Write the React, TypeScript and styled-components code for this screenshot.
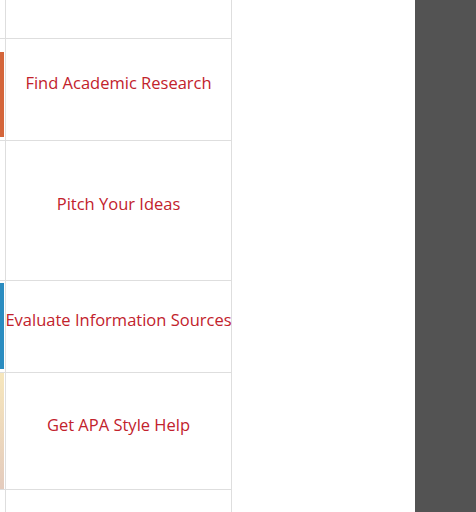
import styled, { createGlobalStyle } from 'styled-components';

const GlobalStyle = createGlobalStyle`
  html, body {
    margin: 0;
    padding: 0;
    background: #ffffff;
  }
  body {
    font-family: 'Open Sans', 'Liberation Sans', sans-serif;
  }
`

type AccentProps = {
  color: string
  top: number
  bottom: number
}

type RowProps = {
  height: number
}

const Page = styled.div`
  display: flex;
  width: 476px;
  height: 512px;
  overflow: hidden;
`

const Column = styled.div`
  display: flex;
  flex-direction: column;
  width: 232px;
  flex: 0 0 auto;
`

const Row = styled.div<RowProps>`
  display: flex;
  height: ${props => props.height}px;
  flex: 0 0 auto;
  border-bottom: 1px solid #dedede;
`

const Accent = styled.div<AccentProps>`
  width: 4px;
  margin-top: ${props => props.top}px;
  margin-bottom: ${props => props.bottom}px;
  margin-right: 1px;
  background: ${props => props.color};
  flex: 0 0 auto;
`

const Cell = styled.div`
  flex: 1;
  min-width: 0;
  display: flex;
  align-items: center;
  justify-content: center;
  padding-bottom: 14px;
  border-left: 1px solid #dedede;
  border-right: 1px solid #dedede;
  color: #c2222c;
  font-size: 16.5px;
  white-space: nowrap;
`

const Gap = styled.div`
  flex: 1;
`

const SidePanel = styled.div`
  width: 61px;
  flex: 0 0 auto;
  background: #535353;
`

const rows = [
  { label: '', height: 38, accent: 'transparent', top: 0, bottom: 0 },
  { label: 'Find Academic Research', height: 101, accent: '#d4653a', top: 13, bottom: 3 },
  { label: 'Pitch Your Ideas', height: 139, accent: 'transparent', top: 0, bottom: 0 },
  { label: 'Evaluate Information Sources', height: 91, accent: '#2a8cc0', top: 2, bottom: 3 },
  { label: 'Get APA Style Help', height: 116, accent: 'linear-gradient(#f6e6bc, #e4cbbd)', top: 0, bottom: 0 },
  { label: '', height: 60, accent: 'transparent', top: 0, bottom: 0 },
]

export default function App() {
  return (
    <Page>
      <GlobalStyle />
      <Column>
        {rows.map((row, i) => (
          <Row key={i} height={row.height}>
            <Accent color={row.accent} top={row.top} bottom={row.bottom} />
            <Cell>{row.label}</Cell>
          </Row>
        ))}
      </Column>
      <Gap />
      <SidePanel />
    </Page>
  );
}
